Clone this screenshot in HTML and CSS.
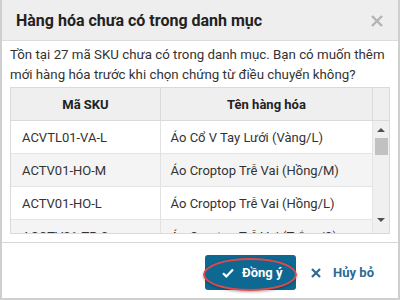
FILE: index.html
```html
<!DOCTYPE html>
<html lang="vi">
  <head>
    <meta charset="UTF-8" />
    <meta name="viewport" content="width=device-width, initial-scale=1.0" />
    <title>Hàng hóa chưa có trong danh mục</title>
    <link rel="stylesheet" href="styles.css">
  </head>
  <body>
    <div class="dialog">
      <div class="dialog-header">
        <h1 class="dialog-title">Hàng hóa chưa có trong danh mục</h1>
        <svg class="close" width="12" height="12" viewBox="0 0 12 12">
          <path d="M1 1 L11 11 M11 1 L1 11" stroke="#b3b3b3" stroke-width="2.4" />
        </svg>
      </div>
      <div class="dialog-body">
        <p class="message">
          Tồn tại 27 mã SKU chưa có trong danh mục. Bạn có muốn thêm
          mới hàng hóa trước khi chọn chứng từ điều chuyển không?
        </p>
        <div class="grid">
          <div class="grid-head">
            <div class="cell col-sku">Mã SKU</div>
            <div class="cell col-name">Tên hàng hóa</div>
            <div class="cell col-bar"></div>
          </div>
          <div class="grid-body">
            <div class="rows">
              <div class="row">
                <div class="cell col-sku">ACVTL01-VA-L</div>
                <div class="cell col-name">Áo Cổ V Tay Lưới (Vàng/L)</div>
              </div>
              <div class="row">
                <div class="cell col-sku">ACTV01-HO-M</div>
                <div class="cell col-name">Áo Croptop Trễ Vai (Hồng/M)</div>
              </div>
              <div class="row">
                <div class="cell col-sku">ACTV01-HO-L</div>
                <div class="cell col-name">Áo Croptop Trễ Vai (Hồng/L)</div>
              </div>
              <div class="row">
                <div class="cell col-sku">ACCTV01-TR-S</div>
                <div class="cell col-name">Áo Croptop Trễ Vai (Trắng/S)</div>
              </div>
            </div>
            <div class="scrollbar">
              <span class="arrow up"></span>
              <span class="thumb"></span>
              <span class="arrow down"></span>
            </div>
          </div>
        </div>
      </div>
      <div class="dialog-footer">
        <button class="btn btn-ok">
          <svg width="12" height="10" viewBox="0 0 12 10">
            <path d="M1 5.2 L4.3 8.4 L11 1.4" fill="none" stroke="#fff" stroke-width="2.2" />
          </svg>
          <span>Đồng ý</span>
        </button>
        <span class="highlight"></span>
        <button class="btn btn-cancel">
          <svg width="10" height="10" viewBox="0 0 10 10">
            <path d="M1 1 L9 9 M9 1 L1 9" stroke="#2b6a96" stroke-width="2.2" />
          </svg>
          <span>Hủy bỏ</span>
        </button>
      </div>
    </div>
  </body>
</html>
```

FILE: styles.css
```css
body {
  margin: 0;
  font-family: Roboto, "Liberation Sans", sans-serif;
  background-color: #fff;
}
.dialog {
  position: relative;
  width: 400px;
  height: 300px;
  box-sizing: border-box;
  border: 2px solid #cfcfcf;
  border-top: none;
  display: flex;
  flex-direction: column;
}
.dialog-header {
  height: 40px;
  background-color: #eeeeee;
  border-bottom: 1px solid #dcdcdc;
  display: flex;
  align-items: center;
  justify-content: space-between;
  padding: 0 15px 0 14px;
}
.dialog-title {
  margin: 0;
  font-size: 16px;
  font-weight: bold;
  color: #222;
}
.close {
  margin-top: 1px;
}
.dialog-body {
  padding: 4px 8px 0 8px;
  height: 197px;
}
.message {
  margin: 0 0 2px 0;
  font-size: 13.3px;
  line-height: 20px;
  color: #333;
}
.grid {
  border: 1px solid #dadada;
  height: 145px;
  overflow: hidden;
  font-size: 13px;
  color: #333;
}
.grid-head {
  display: flex;
  height: 32px;
  background-color: #efefef;
  border-bottom: 1px solid #dadada;
  font-weight: bold;
  color: #222;
}
.grid-head .cell {
  justify-content: center;
  border-right: 1px solid #dadada;
}
.grid-head .col-bar {
  border-right: none;
}
.cell {
  display: flex;
  align-items: center;
  box-sizing: border-box;
  white-space: nowrap;
  overflow: hidden;
}
.col-sku {
  width: 150px;
  border-right: 1px solid #e2e2e2;
}
.col-name {
  width: 212px;
}
.col-bar {
  flex: 1;
}
.grid-body {
  display: flex;
  height: 112px;
}
.rows {
  width: 361px;
}
.row {
  display: flex;
  height: 32px;
  border-bottom: 1px solid #e4e4e4;
}
.row:nth-child(even) {
  background-color: #f4f4f4;
}
.row .col-sku {
  padding-left: 11px;
}
.row .col-name {
  padding-left: 10px;
}
.scrollbar {
  flex: 1;
  background-color: #f0f0f0;
  border-left: 1px solid #e4e4e4;
  display: flex;
  flex-direction: column;
  align-items: center;
  padding-top: 7px;
}
.arrow {
  width: 0;
  height: 0;
  border-left: 4px solid transparent;
  border-right: 4px solid transparent;
}
.arrow.up {
  border-bottom: 4px solid #505050;
}
.arrow.down {
  border-top: 4px solid #505050;
  margin-top: 63px;
}
.thumb {
  width: 13px;
  height: 17px;
  background-color: #c1c1c1;
  margin-top: 6px;
}
.dialog-footer {
  border-top: 1px solid #d6d6d6;
  flex: 1;
  display: flex;
  justify-content: flex-end;
  align-items: flex-start;
  padding: 12px 24px 0 0;
  position: relative;
}
.btn {
  font-family: inherit;
  font-size: 13px;
  font-weight: bold;
  border: none;
  display: flex;
  align-items: center;
  cursor: pointer;
  line-height: 18px;
}
.btn-ok {
  background-color: #0d6892;
  color: white;
  height: 35px;
  width: 91px;
  border-radius: 3px;
  padding: 0 0 0 17px;
  gap: 8px;
}
.btn-cancel {
  background: none;
  color: #2b6a96;
  height: 35px;
  margin-left: 12px;
  padding: 0 0 0 3px;
  gap: 12px;
}
.highlight {
  position: absolute;
  left: 201px;
  top: 15px;
  width: 90px;
  height: 29px;
  border: 2px solid #e2474b;
  border-radius: 50%;
  box-shadow: 0 1px 3px rgba(0, 0, 0, 0.35);
}
```
